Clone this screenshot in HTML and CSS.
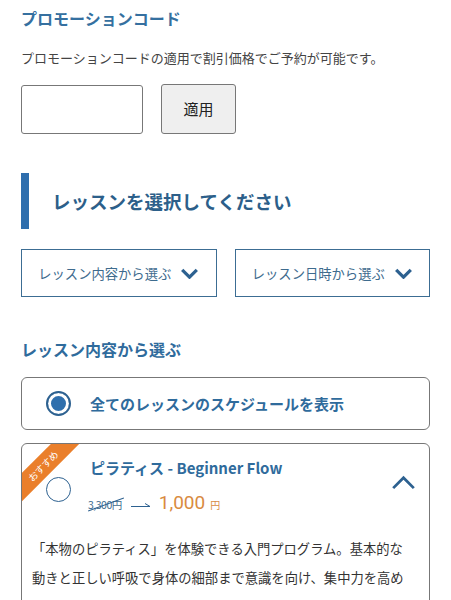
FILE: index.html
```html
<!DOCTYPE html>
<html lang="ja">
<head>
  <meta charset="UTF-8" />
  <title>レッスン予約</title>
  <link rel="stylesheet" href="styles.css">
</head>
<body>
  <main class="page">
    <section class="promo">
      <h2 class="promo-title">プロモーションコード</h2>
      <p class="promo-text">プロモーションコードの適用で割引価格でご予約が可能です。</p>
      <div class="promo-form">
        <input class="promo-input" type="text" />
        <button class="promo-btn" type="button">適用</button>
      </div>
    </section>

    <h2 class="section-heading">レッスンを選択してください</h2>

    <div class="tabs">
      <button class="tab" type="button">
        レッスン内容から選ぶ
        <svg class="tab-chevron" viewBox="0 0 20 12" width="19" height="11"><path d="M2 2 L10 10 L18 2" /></svg>
      </button>
      <button class="tab" type="button">
        レッスン日時から選ぶ
        <svg class="tab-chevron" viewBox="0 0 20 12" width="19" height="11"><path d="M2 2 L10 10 L18 2" /></svg>
      </button>
    </div>

    <h3 class="sub-heading">レッスン内容から選ぶ</h3>

    <div class="option option-all">
      <span class="radio radio-checked"></span>
      <span class="option-label">全てのレッスンのスケジュールを表示</span>
    </div>

    <div class="option lesson">
      <div class="ribbon">おすすめ</div>
      <div class="lesson-head">
        <span class="radio"></span>
        <div class="lesson-info">
          <div class="lesson-title">ピラティス - Beginner Flow</div>
          <div class="price">
            <span class="price-old">3,300円</span>
            <svg class="price-arrow" viewBox="0 0 20 8" width="20" height="8"><path d="M0 5.5 H19 L14 2.5" /></svg>
            <span class="price-new">1,000</span>
            <span class="price-yen">円</span>
          </div>
        </div>
        <svg class="lesson-chevron" viewBox="0 0 26 16" width="25" height="15"><path d="M2 14 L13 3 L24 14" /></svg>
      </div>
      <p class="lesson-desc">「本物のピラティス」を体験できる入門プログラム。基本的な動きと正しい呼吸で身体の細部まで意識を向け、集中力を高めながら全身を動かしていきます。心も身体もしなやかに整うきっかけとして、初めての方にもおすすめです。</p>
    </div>
  </main>
</body>
</html>
```

FILE: styles.css
```css
body {
  margin: 0;
  background: #fff;
  color: #333;
  font-family: "Noto Sans CJK JP", "Noto Sans", sans-serif;
}

.page {
  padding: 0 21px;
}

.promo-title {
  margin: 0;
  padding-top: 7px;
  font-size: 16px;
  line-height: 22px;
  font-weight: bold;
  color: #3570a0;
}

.promo-text {
  margin: 19px 0 0;
  font-size: 13px;
  line-height: 20px;
  color: #444;
}

.promo-form {
  display: flex;
  align-items: center;
  gap: 18px;
  margin-top: 17px;
}

.promo-input {
  box-sizing: border-box;
  width: 122px;
  height: 49px;
  border: 1.5px solid #777;
  border-radius: 3px;
}

.promo-btn {
  box-sizing: border-box;
  width: 75px;
  height: 50px;
  margin-top: -2px;
  background: #efefef;
  border: 1.5px solid #777;
  border-radius: 3px;
  font-family: inherit;
  font-size: 15px;
  color: #222;
}

.section-heading {
  display: flex;
  align-items: center;
  height: 56px;
  margin: 39px 0 0;
  padding-left: 23px;
  border-left: 8px solid #2e6ead;
  font-size: 18.5px;
  font-weight: bold;
  color: #2c5f8a;
}

.tabs {
  display: grid;
  grid-template-columns: 1fr 1fr;
  gap: 18px;
  margin-top: 20px;
}

.tab {
  display: flex;
  align-items: center;
  justify-content: center;
  gap: 9px;
  height: 48px;
  background: #fff;
  border: 1.5px solid #3c6d93;
  font-family: inherit;
  font-size: 13.3px;
  color: #3e6b8e;
}

.tab-chevron path {
  fill: none;
  stroke: #2d6190;
  stroke-width: 3.5;
}

.sub-heading {
  margin: 41px 0 0;
  font-size: 16px;
  line-height: 22px;
  font-weight: bold;
  color: #2f6b9c;
}

.option {
  box-sizing: border-box;
  border: 1.5px solid #777;
  border-radius: 6px;
}

.option-all {
  display: flex;
  align-items: center;
  gap: 19px;
  height: 53px;
  margin-top: 17px;
  padding-left: 24px;
}

.radio {
  box-sizing: border-box;
  flex: none;
  width: 25px;
  height: 25px;
  border: 1.5px solid #2d6190;
  border-radius: 50%;
  background: #fff;
}

.radio-checked {
  border: 2px solid #2d6190;
  box-shadow: inset 0 0 0 3px #fff, inset 0 0 0 12px #2f6fad;
}

.option-label {
  font-size: 15px;
  font-weight: bold;
  color: #2f6b9c;
}

.lesson {
  position: relative;
  overflow: hidden;
  margin-top: 13px;
  padding-top: 13px;
}

.ribbon {
  position: absolute;
  left: -29px;
  top: 12px;
  width: 100px;
  height: 20px;
  line-height: 20px;
  background: #ea7f2b;
  color: #fff;
  font-size: 9.5px;
  text-align: center;
  transform: rotate(-45deg);
}

.lesson-head {
  display: flex;
  align-items: center;
  padding: 0 13px 0 24px;
}

.lesson-head .radio {
  margin-top: 4px;
}

.lesson-info {
  flex: 1;
  margin-left: 19px;
}

.lesson-title {
  font-size: 15px;
  line-height: 22px;
  font-weight: bold;
  color: #2f6b9c;
}

.price {
  display: flex;
  align-items: baseline;
  height: 26px;
  margin-top: 12px;
  margin-left: -2px;
}

.price-old {
  position: relative;
  font-size: 10.5px;
  letter-spacing: -0.5px;
  color: #3e6b8e;
}

.price-old::after {
  content: "";
  position: absolute;
  left: -1px;
  top: 7px;
  width: 38px;
  height: 1px;
  background: #2d6190;
  transform: rotate(-20deg);
}

.price-arrow {
  margin: 0 8px 0 9px;
}

.price-arrow path {
  fill: none;
  stroke: #2d6190;
  stroke-width: 1;
}

.price-new {
  font-family: Roboto, sans-serif;
  font-size: 19px;
  color: #d98b3f;
}

.price-yen {
  margin-left: 5px;
  font-size: 10px;
  color: #d98b3f;
}

.lesson-chevron {
  margin-top: -10px;
}

.lesson-chevron path {
  fill: none;
  stroke: #2d6190;
  stroke-width: 3;
}

.lesson-desc {
  margin: 17px 0 0;
  padding: 0 14px 0 10px;
  font-size: 13.3px;
  line-height: 29px;
  color: #333;
}
```
